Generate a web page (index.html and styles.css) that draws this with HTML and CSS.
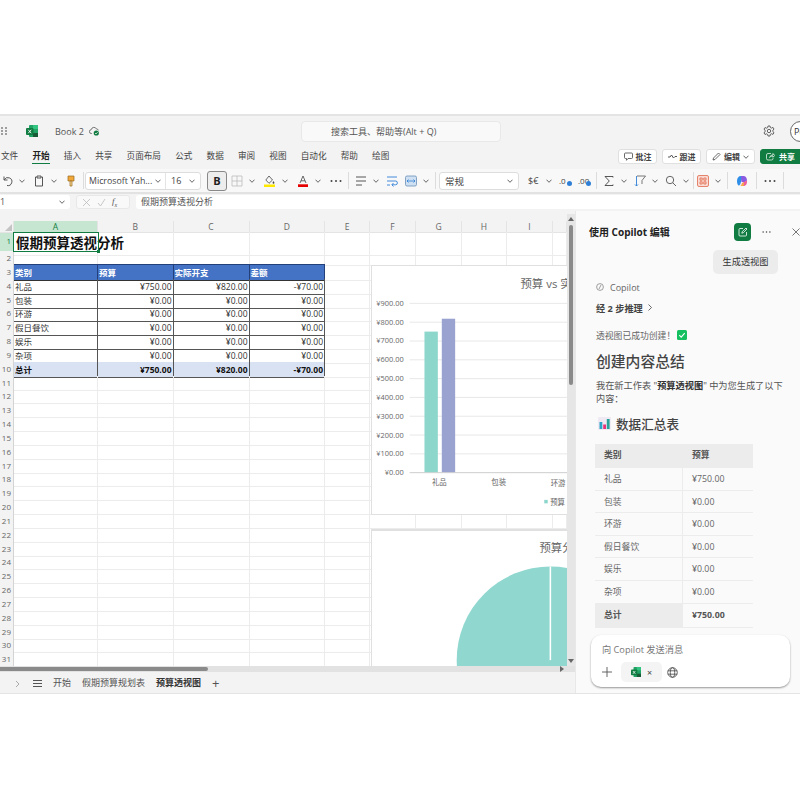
FILE: index.html
```html
<!DOCTYPE html>
<html lang="zh-CN">
<head>
  <meta charset="UTF-8" />
  <meta name="viewport" content="width=device-width, initial-scale=1.0" />
  <title>Book 2 - Excel</title>
  <link rel="stylesheet" href="styles.css">
</head>
<body>
  <svg class="defs" aria-hidden="true">
    <symbol id="chev" viewBox="0 0 6 4"><path d="M.5.7 3 3.3 5.5.7" fill="none" stroke="#555" stroke-width=".9"/></symbol>
    <symbol id="dots" viewBox="0 0 12 2" fill="#444"><circle cx="1.500" cy="1" r="1"/><circle cx="6" cy="1" r="1"/><circle cx="10.500" cy="1" r="1"/></symbol>
    <symbol id="xls" viewBox="0 0 12 12">
      <rect x="3" y="0" width="9" height="12" rx="1" fill="#21a366"/>
      <rect x="7" y="0" width="5" height="4" fill="#33c481"/>
      <rect x="7" y="8" width="5" height="4" fill="#185c37"/>
      <rect x="0" y="3" width="7.500" height="7" rx="1" fill="#107c41"/>
      <path d="M2.300 4.800 5.200 8.200M5.200 4.800 2.300 8.200" stroke="#fff" stroke-width=".9"/>
    </symbol>
  </svg>

  <div class="app">
    <header class="titlebar">
      <svg class="waffle" width="6" height="8" viewBox="0 0 6 8" fill="#333">
        <circle cx="1" cy="1" r=".8"/><circle cx="5" cy="1" r=".8"/><circle cx="1" cy="4" r=".8"/><circle cx="5" cy="4" r=".8"/><circle cx="1" cy="7" r=".8"/><circle cx="5" cy="7" r=".8"/>
      </svg>
      <svg class="app-logo" width="12" height="12"><use href="#xls"/></svg>
      <span class="doc-name">Book 2</span>
      <svg class="cloud" width="11" height="10" viewBox="0 0 11 10">
        <path d="M3 7.500H2.400A1.900 1.900 0 0 1 2.200 3.700 2.800 2.800 0 0 1 7.500 3a2 2 0 0 1 2 1.400" fill="none" stroke="#555" stroke-width=".8"/>
        <circle cx="7.300" cy="7" r="2.600" fill="#107c41"/>
        <path d="M6 7l1 1 1.600-1.800" fill="none" stroke="#fff" stroke-width=".7"/>
      </svg>
      <div class="search">搜索工具、帮助等(Alt + Q)</div>
      <svg class="gear" width="12" height="12" viewBox="0 0 12 12" fill="none" stroke="#555" stroke-width=".9">
        <path d="M5 1h2l.3 1.500 1.300.6L10 2.400l1 1.700-1.100 1 0 1.600 1.100 1-1 1.700-1.400-.7-1.300.7L7 11H5l-.3-1.500-1.300-.7-1.400.7-1-1.700 1.100-1 0-1.600-1.100-1 1-1.700 1.400.7 1.300-.6z"/>
        <circle cx="6" cy="6" r="1.700"/>
      </svg>
      <div class="avatar">Pe</div>
    </header>

    <div class="tabbar">
      <nav class="tabs">
        <span>文件</span><span class="on">开始</span><span>插入</span><span>共享</span><span>页面布局</span><span>公式</span><span>数据</span><span>审阅</span><span>视图</span><span>自动化</span><span>帮助</span><span>绘图</span>
      </nav>
      <div class="actions">
        <button class="act w-note">
          <svg width="9" height="9" viewBox="0 0 9 9"><path d="M1.500 1h6a1 1 0 0 1 1 1v3.500a1 1 0 0 1-1 1H4L2.500 8.300V6.500h-1a1 1 0 0 1-1-1V2a1 1 0 0 1 1-1z" fill="none" stroke="#444" stroke-width=".8"/></svg>批注
        </button>
        <button class="act w-note">
          <svg width="9" height="5" viewBox="0 0 9 5"><path d="M0 3h2l1.500-2L5.500 4 7 2.500h2" fill="none" stroke="#444" stroke-width=".9"/></svg>跟进
        </button>
        <button class="act w-edit">
          <svg width="9" height="9" viewBox="0 0 9 9"><path d="M1 8l.5-2L6.500 1l1.500 1.500-5 5z" fill="none" stroke="#444" stroke-width=".8"/></svg>编辑<svg class="chev" width="6" height="4"><use href="#chev"/></svg>
        </button>
        <button class="act share">
          <svg width="9" height="9" viewBox="0 0 9 9"><path d="M5 1.500H2a1.500 1.500 0 0 0-1.500 1.500v3.500A1.500 1.500 0 0 0 2 8h3.500A1.500 1.500 0 0 0 7 6.500V6M3.500 5.500C4 3.800 5.500 3 7 3V1.500L8.700 3.500 7 5.300V4C5.500 4 4.500 4.500 3.500 5.500z" fill="none" stroke="#fff" stroke-width=".7"/></svg>共享
        </button>
      </div>
    </div>

    <div class="toolbar">
      <div class="sec s8">
        <div class="tool">
          <svg width="12" height="12" viewBox="0 0 12 12"><path d="M3 1.500V5h3.500M3.300 4.800A4 4 0 1 1 6 10.500" fill="none" stroke="#444" stroke-width=".9"/></svg>
          <svg width="6" height="4"><use href="#chev"/></svg>
        </div>
        <div class="tool">
          <svg width="12" height="12" viewBox="0 0 12 12"><path d="M3.500 2H2.500v9h7V2h-1M4 1h4v2H4z" fill="none" stroke="#444" stroke-width=".9"/></svg>
          <svg width="6" height="4"><use href="#chev"/></svg>
        </div>
        <svg class="tool-i" width="12" height="12" viewBox="0 0 12 12"><path d="M3 1h6v5H3z" fill="#f2a73b" stroke="#9a6a20" stroke-width=".7"/><path d="M5 6h2v5H5z" fill="#f6d38f" stroke="#9a6a20" stroke-width=".7"/></svg>
      </div>
      <i class="sep sep-box"></i>
      <div class="fontbox">
        <span class="fname">Microsoft Yah...<svg width="6" height="4"><use href="#chev"/></svg></span>
        <span class="fsize">16<svg width="6" height="4"><use href="#chev"/></svg></span>
      </div>
      <div class="sec s9 after-font">
        <button class="bold">B</button>
        <div class="tool">
          <svg width="12" height="12" viewBox="0 0 12 12"><path d="M1 1h10v10H1zM6 1v10M1 6h10" fill="none" stroke="#bbb" stroke-width=".8"/></svg>
          <svg width="6" height="4"><use href="#chev"/></svg>
        </div>
        <div class="tool">
          <svg width="12" height="12" viewBox="0 0 12 12"><path d="M5 1 1.800 5 5 8.300 8.500 5z" fill="none" stroke="#444" stroke-width=".8"/><path d="M9.500 6c.6 1 .9 1.300.9 1.800a.9.9 0 0 1-1.800 0c0-.5.300-.8.900-1.800z" fill="#444"/><rect x="0" y="9.500" width="11" height="2.500" fill="#ffe900"/></svg>
          <svg width="6" height="4"><use href="#chev"/></svg>
        </div>
        <div class="tool">
          <svg width="12" height="12" viewBox="0 0 12 12"><path d="M3 8 6 1l3 7M4 5.800h4" fill="none" stroke="#444" stroke-width=".8"/><rect x="1" y="9.300" width="10" height="2.700" fill="#e60000"/></svg>
          <svg width="6" height="4"><use href="#chev"/></svg>
        </div>
        <svg class="tool-i" width="12" height="2"><use href="#dots"/></svg>
      </div>
      <i class="sep"></i>
      <div class="sec s7">
        <div class="tool">
          <svg width="12" height="12" viewBox="0 0 12 12"><path d="M1 2h10M1 6h10M1 10h6" stroke="#444" stroke-width=".9"/></svg>
          <svg width="6" height="4"><use href="#chev"/></svg>
        </div>
        <svg class="tool-i" width="12" height="12" viewBox="0 0 12 12"><path d="M1 2h10M1 6h8.500a1.800 1.800 0 0 1 0 3.800H6M7.500 8 5.800 9.800l1.700 1.700M1 10h3" fill="none" stroke="#2f7fd6" stroke-width=".9"/></svg>
        <div class="tool">
          <svg width="12" height="12" viewBox="0 0 12 12"><rect x=".5" y="1" width="11" height="10" rx="1.500" fill="#cfe0f2" stroke="#6a8fb8" stroke-width=".8"/><path d="M2 6h8M3.500 4.500 2 6l1.500 1.500M8.500 4.500 10 6 8.500 7.500" fill="none" stroke="#2f7fd6" stroke-width=".8"/></svg>
          <svg width="6" height="4"><use href="#chev"/></svg>
        </div>
      </div>
      <i class="sep"></i>
      <div class="fmtbox">常规<svg width="6" height="4"><use href="#chev"/></svg></div>
      <div class="sec s7 after-fmt">
        <div class="tool">
          <span class="cur">$€</span>
          <svg width="6" height="4"><use href="#chev"/></svg>
        </div>
        <div class="dec">.0<b></b></div>
        <div class="dec">.00<b></b></div>
      </div>
      <i class="sep"></i>
      <div class="sec s7">
        <div class="tool">
          <svg width="12" height="12" viewBox="0 0 12 12"><path d="M10 2.500V1.500H2L6.300 6 2 10.500h8v-1" fill="none" stroke="#444" stroke-width=".9"/></svg>
          <svg width="6" height="4"><use href="#chev"/></svg>
        </div>
        <div class="tool">
          <svg width="12" height="12" viewBox="0 0 12 12"><path d="M3 1h8.500L8 5.500V9" fill="none" stroke="#555" stroke-width=".8"/><path d="M2.500 1v10M1 9.500l1.500 1.500L4 9.500" fill="none" stroke="#2f7fd6" stroke-width=".9"/></svg>
          <svg width="6" height="4"><use href="#chev"/></svg>
        </div>
        <div class="tool">
          <svg width="12" height="12" viewBox="0 0 12 12"><circle cx="5" cy="5" r="3.700" fill="none" stroke="#555" stroke-width=".9"/><path d="M7.800 7.800 11 11" stroke="#555" stroke-width=".9"/></svg>
          <svg width="6" height="4"><use href="#chev"/></svg>
        </div>
      </div>
      <i class="sep sep-tight"></i>
      <div class="tool">
        <svg width="12" height="12" viewBox="0 0 12 12"><rect x=".5" y=".5" width="11" height="11" rx="1.500" fill="#fbdcd4" stroke="#e0694c" stroke-width=".8"/><path d="M3 3h2.200v2.200H3zM6.800 3H9v2.200H6.800zM3 6.800h2.200V9H3zM6.800 6.800H9V9H6.800z" fill="none" stroke="#e0694c" stroke-width=".8"/></svg>
        <svg width="6" height="4"><use href="#chev"/></svg>
      </div>
      <i class="sep"></i>
      <svg class="tool-i pad-copilot" width="12" height="12" viewBox="0 0 12 12">
        <path d="M1 6c0-3 1.500-5 4-5h2L5 7c-.4 2-1.500 4-2.500 3.500C1.500 10 1 8 1 6z" fill="#2f8fe8"/>
        <path d="M5 1h2.500c2 0 3.500 2 3.500 4.500L9 7H5.500z" fill="#8a5be0"/>
        <path d="M11 5.500c.3 3-1 5.500-3.500 5.500H5L6 8z" fill="#f0609a"/>
        <path d="M3.500 11c1.500 0 2.500-1 3-3l1.500-1-.5 4z" fill="#f5b63c"/>
      </svg>
      <i class="sep"></i>
      <svg class="tool-i pad-dots" width="12" height="2"><use href="#dots"/></svg>
      <i class="sep"></i>
      <svg class="last-chev" width="6" height="4"><use href="#chev"/></svg>
    </div>

    <div class="formulabar">
      <div class="namebox">1<svg width="6" height="4"><use href="#chev"/></svg></div>
      <div class="fxbox">
        <svg width="9" height="9" viewBox="0 0 9 9"><path d="M1 1l7 7M8 1 1 8" stroke="#bbb" stroke-width=".8"/></svg>
        <svg width="9" height="9" viewBox="0 0 9 9"><path d="M1 5l2.500 3L8 1" fill="none" stroke="#bbb" stroke-width=".8"/></svg>
        <em>f<sub>x</sub></em>
      </div>
      <div class="fxinput">假期预算透视分析</div>
    </div>

    <main class="main">
      <section class="sheet">
        <div class="sheet-top">
          <div class="grid">
            <div class="row head">
              <div class="corner"></div><div class="sel">A</div><div>B</div><div>C</div><div>D</div><div>E</div><div>F</div><div>G</div><div>H</div><div>I</div><div></div>
            </div>
            <div class="row tall">
              <div class="rh rh-sel">1</div><div class="title-cell">假期预算透视分析</div><div></div><div></div><div></div><div></div><div></div><div></div><div></div><div></div><div></div>
            </div>
            <div class="row short">
              <div class="rh">2</div><div></div><div></div><div></div><div></div><div></div><div></div><div></div><div></div><div></div><div></div>
            </div>
            <div class="row">
              <div class="rh">3</div><div class="hd">类别</div><div class="hd">预算</div><div class="hd">实际开支</div><div class="hd">差额</div><div></div><div></div><div></div><div></div><div></div><div></div>
            </div>
            <div class="row">
              <div class="rh">4</div><div class="d">礼品</div><div class="d n">¥750.00</div><div class="d n">¥820.00</div><div class="d n">-¥70.00</div><div></div><div></div><div></div><div></div><div></div><div></div>
            </div>
            <div class="row">
              <div class="rh">5</div><div class="d">包装</div><div class="d n">¥0.00</div><div class="d n">¥0.00</div><div class="d n">¥0.00</div><div></div><div></div><div></div><div></div><div></div><div></div>
            </div>
            <div class="row">
              <div class="rh">6</div><div class="d">环游</div><div class="d n">¥0.00</div><div class="d n">¥0.00</div><div class="d n">¥0.00</div><div></div><div></div><div></div><div></div><div></div><div></div>
            </div>
            <div class="row">
              <div class="rh">7</div><div class="d">假日餐饮</div><div class="d n">¥0.00</div><div class="d n">¥0.00</div><div class="d n">¥0.00</div><div></div><div></div><div></div><div></div><div></div><div></div>
            </div>
            <div class="row">
              <div class="rh">8</div><div class="d">娱乐</div><div class="d n">¥0.00</div><div class="d n">¥0.00</div><div class="d n">¥0.00</div><div></div><div></div><div></div><div></div><div></div><div></div>
            </div>
            <div class="row">
              <div class="rh">9</div><div class="d">杂项</div><div class="d n">¥0.00</div><div class="d n">¥0.00</div><div class="d n">¥0.00</div><div></div><div></div><div></div><div></div><div></div><div></div>
            </div>
            <div class="row">
              <div class="rh">10</div><div class="d tot">总计</div><div class="d n tot">¥750.00</div><div class="d n tot">¥820.00</div><div class="d n tot">-¥70.00</div><div></div><div></div><div></div><div></div><div></div><div></div>
            </div>
            <div class="row"><div class="rh">11</div><div></div><div></div><div></div><div></div><div></div><div></div><div></div><div></div><div></div><div></div></div>
            <div class="row"><div class="rh">12</div><div></div><div></div><div></div><div></div><div></div><div></div><div></div><div></div><div></div><div></div></div>
            <div class="row"><div class="rh">13</div><div></div><div></div><div></div><div></div><div></div><div></div><div></div><div></div><div></div><div></div></div>
            <div class="row"><div class="rh">14</div><div></div><div></div><div></div><div></div><div></div><div></div><div></div><div></div><div></div><div></div></div>
            <div class="row"><div class="rh">15</div><div></div><div></div><div></div><div></div><div></div><div></div><div></div><div></div><div></div><div></div></div>
            <div class="row"><div class="rh">16</div><div></div><div></div><div></div><div></div><div></div><div></div><div></div><div></div><div></div><div></div></div>
            <div class="row"><div class="rh">17</div><div></div><div></div><div></div><div></div><div></div><div></div><div></div><div></div><div></div><div></div></div>
            <div class="row"><div class="rh">18</div><div></div><div></div><div></div><div></div><div></div><div></div><div></div><div></div><div></div><div></div></div>
            <div class="row"><div class="rh">19</div><div></div><div></div><div></div><div></div><div></div><div></div><div></div><div></div><div></div><div></div></div>
            <div class="row"><div class="rh">20</div><div></div><div></div><div></div><div></div><div></div><div></div><div></div><div></div><div></div><div></div></div>
            <div class="row"><div class="rh">21</div><div></div><div></div><div></div><div></div><div></div><div></div><div></div><div></div><div></div><div></div></div>
            <div class="row"><div class="rh">22</div><div></div><div></div><div></div><div></div><div></div><div></div><div></div><div></div><div></div><div></div></div>
            <div class="row"><div class="rh">23</div><div></div><div></div><div></div><div></div><div></div><div></div><div></div><div></div><div></div><div></div></div>
            <div class="row"><div class="rh">24</div><div></div><div></div><div></div><div></div><div></div><div></div><div></div><div></div><div></div><div></div></div>
            <div class="row"><div class="rh">25</div><div></div><div></div><div></div><div></div><div></div><div></div><div></div><div></div><div></div><div></div></div>
            <div class="row"><div class="rh">26</div><div></div><div></div><div></div><div></div><div></div><div></div><div></div><div></div><div></div><div></div></div>
            <div class="row"><div class="rh">27</div><div></div><div></div><div></div><div></div><div></div><div></div><div></div><div></div><div></div><div></div></div>
            <div class="row"><div class="rh">28</div><div></div><div></div><div></div><div></div><div></div><div></div><div></div><div></div><div></div><div></div></div>
            <div class="row"><div class="rh">29</div><div></div><div></div><div></div><div></div><div></div><div></div><div></div><div></div><div></div><div></div></div>
            <div class="row"><div class="rh">30</div><div></div><div></div><div></div><div></div><div></div><div></div><div></div><div></div><div></div><div></div></div>
            <div class="row"><div class="rh">31</div><div></div><div></div><div></div><div></div><div></div><div></div><div></div><div></div><div></div><div></div></div>

            <div class="cellsel"></div>

            <svg class="chart chart-bar" width="200" height="250" viewBox="0 0 200 250">
              <text class="c-title" x="150" y="22">预算 vs 实际开支</text>
              <g stroke="#e8e8e8">
                <path d="M38 37.500h170M38 56.500h170M38 75.500h170M38 94.500h170M38 113.500h170M38 132.500h170M38 151.500h170M38 170.500h170M38 189.500h170"/>
              </g>
              <path d="M38 208.500h170" stroke="#ccc"/>
              <g class="c-axis" text-anchor="end">
                <text x="32" y="40">¥900.00</text><text x="32" y="59">¥800.00</text><text x="32" y="78">¥700.00</text><text x="32" y="97">¥600.00</text><text x="32" y="116">¥500.00</text><text x="32" y="135">¥400.00</text><text x="32" y="154">¥300.00</text><text x="32" y="173">¥200.00</text><text x="32" y="192">¥100.00</text><text x="32" y="211">¥0.00</text>
              </g>
              <rect x="53" y="66" width="13.500" height="142" fill="#8dd6cc"/>
              <rect x="70.500" y="53" width="13.500" height="155" fill="#9aa3d0"/>
              <g class="c-axis" text-anchor="middle">
                <text x="68" y="221">礼品</text><text x="128" y="221">包装</text><text x="188" y="222">环游</text>
              </g>
              <rect x="174" y="236" width="3.500" height="3.500" fill="#8dd6cc"/>
              <text class="c-axis" x="180" y="241">预算</text>
            </svg>

            <svg class="chart chart-pie" width="200" height="140" viewBox="0 0 200 140">
              <text class="c-title" x="169" y="21">预算分布</text>
              <circle cx="180" cy="131" r="95" fill="#8fd7cf"/>
              <path d="M180 36v95" stroke="#fff" stroke-width="1.600"/>
            </svg>
          </div>
          <div class="vscroll">
            <span class="arrow up"></span>
            <span class="thumb"></span>
            <span class="arrow down"></span>
          </div>
        </div>
        <div class="hscroll"><span class="hthumb"></span><span class="arrow right"></span></div>
        <div class="sheets">
          <svg class="prev" width="5" height="8" viewBox="0 0 5 8"><path d="M1 1l3 3-3 3" fill="none" stroke="#aaa"/></svg>
          <svg class="menu" width="9" height="7" viewBox="0 0 9 7"><path d="M0 .5h9M0 3.500h9M0 6.500h9" stroke="#555"/></svg>
          <span class="st">开始</span>
          <span class="st">假期预算规划表</span>
          <span class="st active">预算透视图</span>
          <span class="st-add">+</span>
        </div>
      </section>

      <aside class="panel">
        <div class="p-head">
          <b>使用 Copilot 编辑</b>
          <span class="p-new">
            <svg width="10" height="10" viewBox="0 0 10 10"><path d="M5 1.500H2A1 1 0 0 0 1 2.500V8a1 1 0 0 0 1 1h5.500a1 1 0 0 0 1-1V5M3.800 6.200l.4-1.500L8 1l1 1-3.700 3.800z" fill="none" stroke="#fff" stroke-width=".8"/></svg>
          </span>
          <svg class="p-more" width="9" height="2"><use href="#dots"/></svg>
          <svg class="p-close" width="8" height="8" viewBox="0 0 8 8"><path d="M.5.5l7 7M7.500.5l-7 7" stroke="#555" stroke-width=".8"/></svg>
        </div>
        <div class="p-prompt"><span>生成透视图</span></div>
        <div class="p-body">
          <div class="p-who">
            <svg width="8" height="8" viewBox="0 0 8 8"><circle cx="4" cy="4" r="3.400" fill="none" stroke="#888" stroke-width=".8"/><path d="M3 6l2-4" stroke="#888" stroke-width=".8"/></svg>
            Copilot
          </div>
          <div class="p-steps">经 2 步推理<svg width="4" height="7" viewBox="0 0 4 7"><path d="M.5.5l3 3-3 3" fill="none" stroke="#444" stroke-width=".8"/></svg></div>
          <div class="p-ok">透视图已成功创建！
            <svg width="10" height="10" viewBox="0 0 10 10"><rect width="10" height="10" rx="1.500" fill="#16c060"/><path d="M2.300 5.200l1.900 1.900 3.500-4" fill="none" stroke="#fff" stroke-width="1.100"/></svg>
          </div>
          <h2>创建内容总结</h2>
          <p class="p-text">我在新工作表 "<b>预算透视图</b>" 中为您生成了以下内容：</p>
          <h3>
            <svg width="13" height="13" viewBox="0 0 13 13"><rect width="13" height="13" rx="1" fill="#efe9f3"/><rect x="1.500" y="5" width="2.800" height="7" fill="#2aa6c9"/><rect x="5.200" y="7.500" width="2.800" height="4.500" fill="#e6337a"/><rect x="8.800" y="2" width="2.800" height="10" fill="#27a39c"/></svg>
            数据汇总表
          </h3>
          <div class="p-table">
            <div class="pt-row pt-head"><span>类别</span><span>预算</span></div>
            <div class="pt-row"><span>礼品</span><span>¥750.00</span></div>
            <div class="pt-row"><span>包装</span><span>¥0.00</span></div>
            <div class="pt-row"><span>环游</span><span>¥0.00</span></div>
            <div class="pt-row"><span>假日餐饮</span><span>¥0.00</span></div>
            <div class="pt-row"><span>娱乐</span><span>¥0.00</span></div>
            <div class="pt-row"><span>杂项</span><span>¥0.00</span></div>
            <div class="pt-row pt-total"><span>总计</span><span>¥750.00</span></div>
          </div>
        </div>
        <div class="composer">
          <div class="c-hint">向 Copilot 发送消息</div>
          <div class="c-tools">
            <svg width="10" height="10" viewBox="0 0 10 10"><path d="M5 0v10M0 5h10" stroke="#555" stroke-width=".9"/></svg>
            <span class="chip"><svg width="10" height="10"><use href="#xls"/></svg><i>×</i></span>
            <svg width="11" height="11" viewBox="0 0 11 11" fill="none" stroke="#444" stroke-width=".8"><circle cx="5.500" cy="5.500" r="4.800"/><ellipse cx="5.500" cy="5.500" rx="2.200" ry="4.800"/><path d="M.9 3.800h9.200M.9 7.200h9.200"/></svg>
          </div>
        </div>
      </aside>
    </main>
  </div>
</body>
</html>
```

FILE: styles.css
```css
* {
  box-sizing: border-box;
}
body {
  margin: 0;
  background: #fff;
  color: #333;
  font-family: "Open Sans", "Noto Sans CJK SC", sans-serif;
  font-size: 9px;
  overflow: hidden;
}
.defs {
  position: absolute;
  width: 0;
  height: 0;
}
button {
  font-family: inherit;
}
.app {
  margin-top: 114px;
  width: 800px;
  height: 580px;
  background: #f3f3f3;
  border-top: 2px solid #e4e4e4;
  border-bottom: 1px solid #e4e4e4;
  overflow: hidden;
  display: flex;
  flex-direction: column;
}

/* title bar */
.titlebar {
  height: 30px;
  flex: none;
  display: flex;
  align-items: center;
  padding-left: 1px;
}
.titlebar > * {
  flex: none;
}
.app-logo {
  margin-left: 19px;
}
.doc-name {
  margin-left: 17px;
  color: #555;
  width: 33px;
  white-space: nowrap;
}
.cloud {
  margin-left: 1px;
}
.search {
  margin-left: 201px;
  width: 200px;
  height: 21px;
  background: #f9f9f9;
  border: 1px solid #e8e8e8;
  border-radius: 4px;
  padding-left: 29px;
  line-height: 19px;
  color: #555;
}
.gear {
  margin-left: 262px;
}
.avatar {
  margin-left: 15px;
  width: 21px;
  height: 21px;
  border: 1px solid #666;
  border-radius: 50%;
  line-height: 19px;
  padding-left: 3px;
  background: #fff;
}

/* tabs */
.tabbar {
  height: 23px;
  flex: none;
  display: flex;
  justify-content: space-between;
  align-items: flex-start;
}
.tabs {
  display: flex;
  gap: 14.200px;
  padding-left: 1px;
  font-size: 8.600px;
  color: #444;
  height: 18px;
  align-items: center;
  flex: none;
}
.tabs .on {
  font-weight: 700;
  color: #222;
  position: relative;
}
.tabs .on::after {
  content: "";
  position: absolute;
  left: 0;
  right: 0;
  top: 14px;
  height: 1.500px;
  background: #107c41;
}
.actions {
  display: flex;
  gap: 5px;
  flex: none;
  width: 182px;
  margin-top: 3px;
}
.act {
  height: 15px;
  padding: 0;
  flex: none;
  display: flex;
  align-items: center;
  justify-content: center;
  gap: 3px;
  background: #fff;
  border: 1px solid #e0e0e0;
  border-radius: 3px;
  font-size: 8px;
  font-weight: 700;
  color: #444;
}
.w-note {
  width: 39px;
}
.w-edit {
  width: 49px;
}
.share {
  width: 50px;
  background: #107c41;
  border-color: #107c41;
  color: #fff;
  justify-content: flex-start;
  padding-left: 5px;
  gap: 4px;
  border-radius: 3px 0 0 3px;
}

/* ribbon */
.toolbar {
  height: 25px;
  flex: none;
  display: flex;
  align-items: center;
  padding-left: 1px;
  background: #f8f8f8;
  border-bottom: 2px solid #e2e2e2;
}
.sec {
  display: flex;
  align-items: center;
  flex: none;
}
.s7 { gap: 7px; }
.s8 { gap: 8px; }
.s9 { gap: 9px; }
.tool {
  width: 24px;
  flex: none;
  display: flex;
  align-items: center;
  justify-content: space-between;
}
.tool-i {
  flex: none;
}
.sep {
  width: 1px;
  height: 17px;
  background: #dcdcdc;
  margin: 0 6px;
  flex: none;
}
.sep-box {
  margin-right: 1px;
}
.sep-tight {
  margin: 0 3px 0 4px;
}
.fontbox {
  width: 116px;
  height: 18px;
  flex: none;
  display: flex;
  background: #fff;
  border: 1px solid #ddd;
  border-radius: 3px;
  color: #444;
  line-height: 16px;
}
.fname {
  width: 80px;
  padding-left: 3px;
  display: flex;
  align-items: center;
  justify-content: space-between;
  padding-right: 4px;
  border-right: 1px solid #e4e4e4;
  white-space: nowrap;
  font-size: 8.800px;
}
.fsize {
  flex: 1;
  display: flex;
  align-items: center;
  justify-content: space-between;
  padding: 0 5px 0 5px;
}
.after-font {
  margin-left: 6px;
}
.bold {
  width: 20px;
  height: 20px;
  padding: 0;
  margin-right: -5px;
  background: #ededed;
  border: 1px solid #888;
  border-radius: 3px;
  font-size: 11px;
  font-weight: 700;
  color: #222;
}
.fmtbox {
  width: 80px;
  height: 18px;
  flex: none;
  margin-left: -3px;
  display: flex;
  align-items: center;
  justify-content: space-between;
  padding: 0 5px;
  background: #fff;
  border: 1px solid #ddd;
  border-radius: 3px;
  color: #444;
  font-size: 9.500px;
}
.after-fmt {
  margin-left: 9px;
}
.cur {
  font-size: 9px;
  color: #444;
}
.dec {
  position: relative;
  width: 12px;
  flex: none;
  color: #444;
  font-size: 8px;
  white-space: nowrap;
}
.dec b {
  position: absolute;
  right: -1px;
  bottom: 0;
  width: 5px;
  height: 5px;
  border-radius: 50%;
  background: #2f7fd6;
}
.pad-copilot {
  margin: 0 2px;
}
.pad-dots {
  margin: 0 1px;
}
.last-chev {
  flex: none;
  margin-left: 10px;
}

/* formula bar */
.formulabar {
  height: 17px;
  flex: none;
  display: flex;
  align-items: center;
  padding-bottom: 1px;
}
.namebox {
  width: 70px;
  height: 14px;
  flex: none;
  background: #fff;
  border-radius: 0 3px 3px 0;
  display: flex;
  align-items: center;
  justify-content: space-between;
  padding-right: 5px;
  color: #555;
  line-height: 14px;
}
.fxbox {
  width: 54px;
  height: 14px;
  flex: none;
  margin-left: 6px;
  background: #f9f9f9;
  border: 1px solid #e8e8e8;
  border-radius: 3px;
  display: flex;
  align-items: center;
  gap: 6px;
  padding-left: 5px;
}
.fxbox em {
  font-family: "Liberation Serif", serif;
  color: #555;
  font-size: 9px;
}
.fxbox sub {
  font-size: 6px;
}
.fxinput {
  flex: 1;
  height: 14px;
  margin-left: 6px;
  background: #fff;
  border-radius: 3px 0 0 3px;
  padding-left: 5px;
  color: #555;
  line-height: 14px;
}

/* sheet */
.main {
  flex: 1;
  min-height: 0;
  display: flex;
}
.sheet {
  width: 575px;
  flex: none;
  display: flex;
  flex-direction: column;
  padding-top: 3px;
}
.sheet-top {
  height: 452px;
  flex: none;
  display: flex;
}
.grid {
  position: relative;
  width: 567px;
  flex: none;
  padding-top: 7px;
  overflow: hidden;
}
.row {
  display: grid;
  grid-template-columns: 14px 84px 75.500px 76px 75.500px 45px 46px 46px 45px 46px 14px;
  height: 13.830px;
  background: #fff;
}
.row > div {
  border-right: 1px solid #ececec;
  border-bottom: 1px solid #ececec;
  white-space: nowrap;
  font-size: 8.500px;
  line-height: 15px;
  padding: 0 1px;
}
.row.tall {
  height: 19px;
}
.row.short {
  height: 14px;
}
.row.head {
  height: 11px;
  background: #f3f3f3;
}
.row.head > div {
  text-align: center;
  color: #666;
  line-height: 11px;
  border-color: #e4e4e4;
}
.row.head > .sel {
  background: #c7e6d2;
  color: #107c41;
}
.corner {
  position: relative;
}
.corner::after {
  content: "";
  position: absolute;
  right: 1px;
  bottom: 1px;
  border-left: 7px solid transparent;
  border-bottom: 7px solid #c4c4c4;
}
.row > .rh {
  background: #f3f3f3;
  color: #666;
  text-align: right;
  padding: 0 2px 0 0;
  border-right: 1px solid #d4d4d4;
  border-bottom-color: #e8e8e8;
  font-size: 8px;
  line-height: 14px;
}
.row.tall > div {
  line-height: 18px;
}
.row > .rh-sel {
  background: #c7e6d2;
  color: #107c41;
}
.row.tall > .title-cell {
  overflow: visible;
  font-size: 13.500px;
  font-weight: 700;
  color: #111;
  padding-left: 2px;
  border-right: none;
  line-height: 23px;
}
.row > .hd {
  background: #4472c4;
  color: #fff;
  font-weight: 700;
  border-right: 1px solid #24407a;
  border-bottom: 1px solid #333;
  box-shadow: 0 -1px 0 #24407a;
}
.row > .d {
  color: #333;
  border-right: 1px solid #555;
  border-bottom: 1px solid #555;
}
.row > .n {
  text-align: right;
}
.row > .tot {
  background: #d9e2f3;
  font-weight: 700;
  color: #111;
}
.cellsel {
  position: absolute;
  left: 13px;
  top: 18px;
  width: 86px;
  height: 20px;
  border: 1px solid #107c41;
}
.cellsel::after {
  content: "";
  position: absolute;
  right: -2px;
  bottom: -2px;
  width: 3px;
  height: 3px;
  background: #107c41;
}
.chart {
  position: absolute;
  left: 371px;
  background: #fff;
  border: 1px solid #e0e0e0;
  font-family: "Open Sans", "Noto Sans CJK SC", sans-serif;
}
.chart-bar {
  top: 51px;
}
.chart-pie {
  top: 315px;
  border-width: 2px 0 0 1px;
}
.c-title {
  font-size: 11.500px;
  fill: #666;
}
.c-axis {
  font-size: 7.500px;
  fill: #666;
}

/* scrollbars */
.vscroll {
  width: 8px;
  flex: none;
  background: #e6e6e6;
  position: relative;
  display: flex;
  flex-direction: column;
  align-items: center;
}
.thumb {
  width: 4px;
  height: 160px;
  margin-top: 4px;
  background: #8a8a8a;
  border-radius: 2px;
}
.arrow {
  width: 0;
  height: 0;
  border: 3px solid transparent;
}
.arrow.up {
  margin-top: 3px;
  border-top: 0;
  border-bottom: 4px solid #666;
}
.arrow.down {
  margin-top: auto;
  margin-bottom: 3px;
  border-bottom: 0;
  border-top: 4px solid #666;
}
.hscroll {
  height: 6px;
  flex: none;
  background: #e2e2e2;
  display: flex;
  align-items: center;
}
.hthumb {
  width: 208px;
  height: 4px;
  background: #8a8a8a;
  border-radius: 0 2px 2px 0;
}
.arrow.right {
  margin-left: auto;
  margin-right: 11px;
  border-right: 0;
  border-left: 4px solid #666;
}

/* sheet tabs */
.sheets {
  flex: 1;
  display: flex;
  align-items: center;
  padding: 1px 0 0 15px;
  color: #555;
}
.menu {
  margin-left: 13px;
}
.st {
  margin-left: 11px;
  height: 21px;
  line-height: 20px;
  white-space: nowrap;
}
.st.active {
  color: #333;
  font-weight: 700;
  border-bottom: 1.500px solid #107c41;
}
.st-add {
  margin-left: 11px;
  font-size: 13px;
  line-height: 13px;
}

/* copilot panel */
.panel {
  flex: 1;
  min-width: 0;
  position: relative;
  background: #fafafa;
  border-left: 1px solid #e8e8e8;
  display: flex;
  flex-direction: column;
  color: #444;
}
.p-head {
  height: 39px;
  flex: none;
  display: flex;
  align-items: center;
  padding: 2px 0 0 13px;
}
.p-head b {
  font-size: 10px;
  color: #222;
  width: 132px;
  flex: none;
  white-space: nowrap;
}
.p-new {
  width: 17px;
  height: 18px;
  flex: none;
  margin-left: 13px;
  background: #107c41;
  border-radius: 4px;
  display: flex;
  align-items: center;
  justify-content: center;
}
.p-more {
  flex: none;
  margin-left: 11px;
}
.p-close {
  margin-left: 21px;
  flex: none;
}
.p-prompt {
  display: flex;
  justify-content: flex-end;
  padding-right: 22px;
  flex: none;
}
.p-prompt span {
  width: 65px;
  height: 24px;
  background: #ececec;
  border-radius: 5px;
  text-align: center;
  line-height: 23px;
  font-size: 9.200px;
  color: #333;
}
.p-body {
  flex: 1;
  min-height: 0;
  padding: 0 0 0 20px;
  overflow: hidden;
}
.p-who {
  display: flex;
  align-items: center;
  gap: 6px;
  margin-top: 7px;
  height: 12px;
  color: #666;
}
.p-steps {
  margin-top: 8px;
  height: 13px;
  display: flex;
  align-items: center;
  gap: 5px;
  font-size: 9.200px;
  font-weight: 700;
  color: #444;
}
.p-ok {
  margin-top: 15px;
  height: 12px;
  display: flex;
  align-items: center;
  gap: 2px;
  color: #666;
  font-size: 8.800px;
}
.p-body h2 {
  margin: 9px 0 0;
  height: 22px;
  font-size: 14.800px;
  line-height: 22px;
  font-weight: 500;
  color: #444;
}
.p-text {
  margin: 7px 0 0;
  width: 190px;
  font-size: 9.200px;
  line-height: 13px;
  color: #555;
}
.p-text b {
  color: #333;
}
.p-body h3 {
  margin: 8px 0 0;
  display: flex;
  align-items: center;
  gap: 5px;
  height: 20px;
  font-size: 12.600px;
  font-weight: 500;
  color: #444;
  padding-left: 2px;
}
.p-table {
  margin-top: 11px;
  width: 158px;
  margin-left: -1px;
}
.pt-row {
  display: grid;
  grid-template-columns: 88px 70px;
  height: 22.600px;
  line-height: 22px;
  font-size: 8.800px;
  color: #666;
  border-bottom: 1px solid #ececec;
}
.pt-row span {
  padding-left: 9px;
}
.pt-row span:first-child {
  border-right: 1px solid #ececec;
}
.pt-head {
  height: 24px;
  background: #ececec;
  font-weight: 700;
  color: #555;
}
.pt-total {
  height: 24px;
  font-weight: 700;
  color: #555;
}
.pt-total span:first-child {
  background: #ececec;
}
.composer {
  position: absolute;
  left: 15px;
  top: 424px;
  width: 199px;
  height: 52px;
  background: #fff;
  border-radius: 10px;
  box-shadow: 0 1px 2px rgba(0, 0, 0, 0.4);
  padding: 7px 11px;
}
.c-hint {
  height: 13px;
  color: #777;
  font-size: 9.200px;
}
.c-tools {
  margin-top: 7px;
  display: flex;
  align-items: center;
}
.chip {
  width: 41px;
  height: 20px;
  margin-left: 9px;
  margin-right: 5px;
  background: #f4f4f4;
  border-radius: 5px;
  display: flex;
  align-items: center;
  justify-content: center;
  gap: 6px;
}
.chip i {
  font-style: normal;
  font-size: 9px;
  color: #444;
}
```
